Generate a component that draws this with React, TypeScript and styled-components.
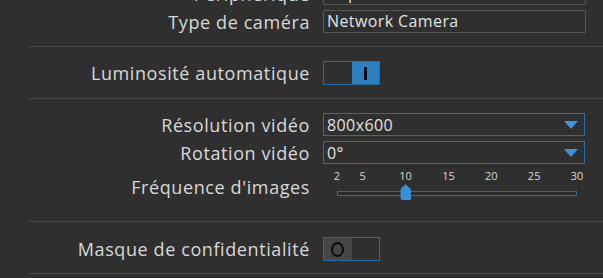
import React from 'react';
import styled, { createGlobalStyle } from 'styled-components';

const GlobalStyle = createGlobalStyle`
    body {
        margin: 0;
        background: #2f2f2f;
        font-family: "Open Sans", "Noto Sans", sans-serif;
    }
`;

const Page = styled.div`
    width: 603px;
    height: 278px;
    overflow: hidden;
    background: #2f2f2f;
`;

const Section = styled.div<{ top?: number; bottom?: number; lead?: number }>`
    margin-left: 28px;
    margin-top: ${(p) => p.lead ?? 0}px;
    padding-top: ${(p) => p.top ?? 14}px;
    padding-bottom: ${(p) => p.bottom ?? 13}px;
    border-bottom: 1px solid #474747;
    display: flex;
    flex-direction: column;
    gap: 5px;
`;

const Row = styled.div`
    display: grid;
    grid-template-columns: 282px 1fr;
    column-gap: 13px;
    align-items: center;
`;

const Label = styled.div<{ lift?: number }>`
    text-align: right;
    font-size: 18px;
    letter-spacing: 0.6px;
    line-height: 22px;
    color: #d8d8d8;
    white-space: nowrap;
    margin-bottom: ${(p) => p.lift ?? 0}px;
`;

const TextBox = styled.div`
    box-sizing: border-box;
    height: 23px;
    margin-right: 17px;
    border: 1px solid #565656;
    border-radius: 1px;
    padding: 0 3px;
    font-size: 16px;
    letter-spacing: 0.4px;
    line-height: 21px;
    color: #e2e2e2;
    white-space: nowrap;
    overflow: hidden;
`;

const Select = styled.div`
    box-sizing: border-box;
    height: 23px;
    margin-right: 18px;
    border: 1px solid #2c6ea4;
    padding: 0 3px;
    display: flex;
    align-items: center;
    justify-content: space-between;
    font-size: 16px;
    letter-spacing: 0.4px;
    color: #e2e2e2;
`;

const Arrow = styled.span`
    width: 0;
    height: 0;
    margin-right: 3px;
    border-left: 7px solid transparent;
    border-right: 7px solid transparent;
    border-top: 8px solid #3b95dd;
`;

const Toggle = styled.div`
    box-sizing: border-box;
    width: 57px;
    height: 24px;
    border: 1px solid #2a6aa0;
    display: flex;
`;

const Half = styled.div<{ fill: string }>`
    flex: 1;
    background: ${(p) => p.fill};
    display: flex;
    align-items: center;
    justify-content: center;
`;

const Ring = styled.span`
    width: 9px;
    height: 11px;
    border: 2px solid #0a0a0a;
    border-radius: 50%;
`;

const Bar = styled.span`
    width: 3px;
    height: 13px;
    background: #0a0a0a;
`;

const SliderBox = styled.div`
    position: relative;
    width: 240px;
    height: 34px;
    margin-left: 14px;
    margin-bottom: 13px;
`;

const Tick = styled.span`
    position: absolute;
    top: -1px;
    transform: translateX(-50%);
    font-size: 11px;
    color: #d8d8d8;
`;

const Track = styled.div`
    position: absolute;
    left: 0;
    right: 0;
    top: 22px;
    height: 5px;
    box-sizing: border-box;
    border: 1px solid #2c6ea4;
    background: #2a2a2a;
`;

const Thumb = styled.div`
    position: absolute;
    top: 15px;
    width: 11px;
    height: 16px;
    background: #3a8fd6;
    clip-path: polygon(50% 0, 100% 35%, 100% 100%, 0 100%, 0 35%);
    border-radius: 2px;
    transform: translateX(-50%);
`;

const ticks = [2, 5, 10, 15, 20, 25, 30];
const pos = (v: number) => ((v - 2) / 28) * 240;

const App: React.FC = () => {
    return (
        <Page>
            <GlobalStyle />
            <Section lead={-32}>
                <Row>
                    <Label>Périphérique</Label>
                    <TextBox>rtsp://192.168.0.150/1</TextBox>
                </Row>
                <Row>
                    <Label>Type de caméra</Label>
                    <TextBox>Network Camera</TextBox>
                </Row>
            </Section>
            <Section>
                <Row>
                    <Label>Luminosité automatique</Label>
                    <Toggle>
                        <Half fill="#2f2f2f" />
                        <Half fill="#2e7fc0">
                            <Bar />
                        </Half>
                    </Toggle>
                </Row>
            </Section>
            <Section bottom={5}>
                <Row>
                    <Label>Résolution vidéo</Label>
                    <Select>
                        800x600
                        <Arrow />
                    </Select>
                </Row>
                <Row>
                    <Label>Rotation vidéo</Label>
                    <Select>
                        0°
                        <Arrow />
                    </Select>
                </Row>
                <Row>
                    <Label lift={11}>Fréquence d'images</Label>
                    <SliderBox>
                        {ticks.map((t) => (
                            <Tick key={t} style={{ left: pos(t) }}>
                                {t}
                            </Tick>
                        ))}
                        <Track />
                        <Thumb style={{ left: pos(10) }} />
                    </SliderBox>
                </Row>
            </Section>
            <Section top={15} bottom={12}>
                <Row>
                    <Label>Masque de confidentialité</Label>
                    <Toggle>
                        <Half fill="#454545">
                            <Ring />
                        </Half>
                        <Half fill="#2f2f2f" />
                    </Toggle>
                </Row>
            </Section>
        </Page>
    );
};

export default App;
